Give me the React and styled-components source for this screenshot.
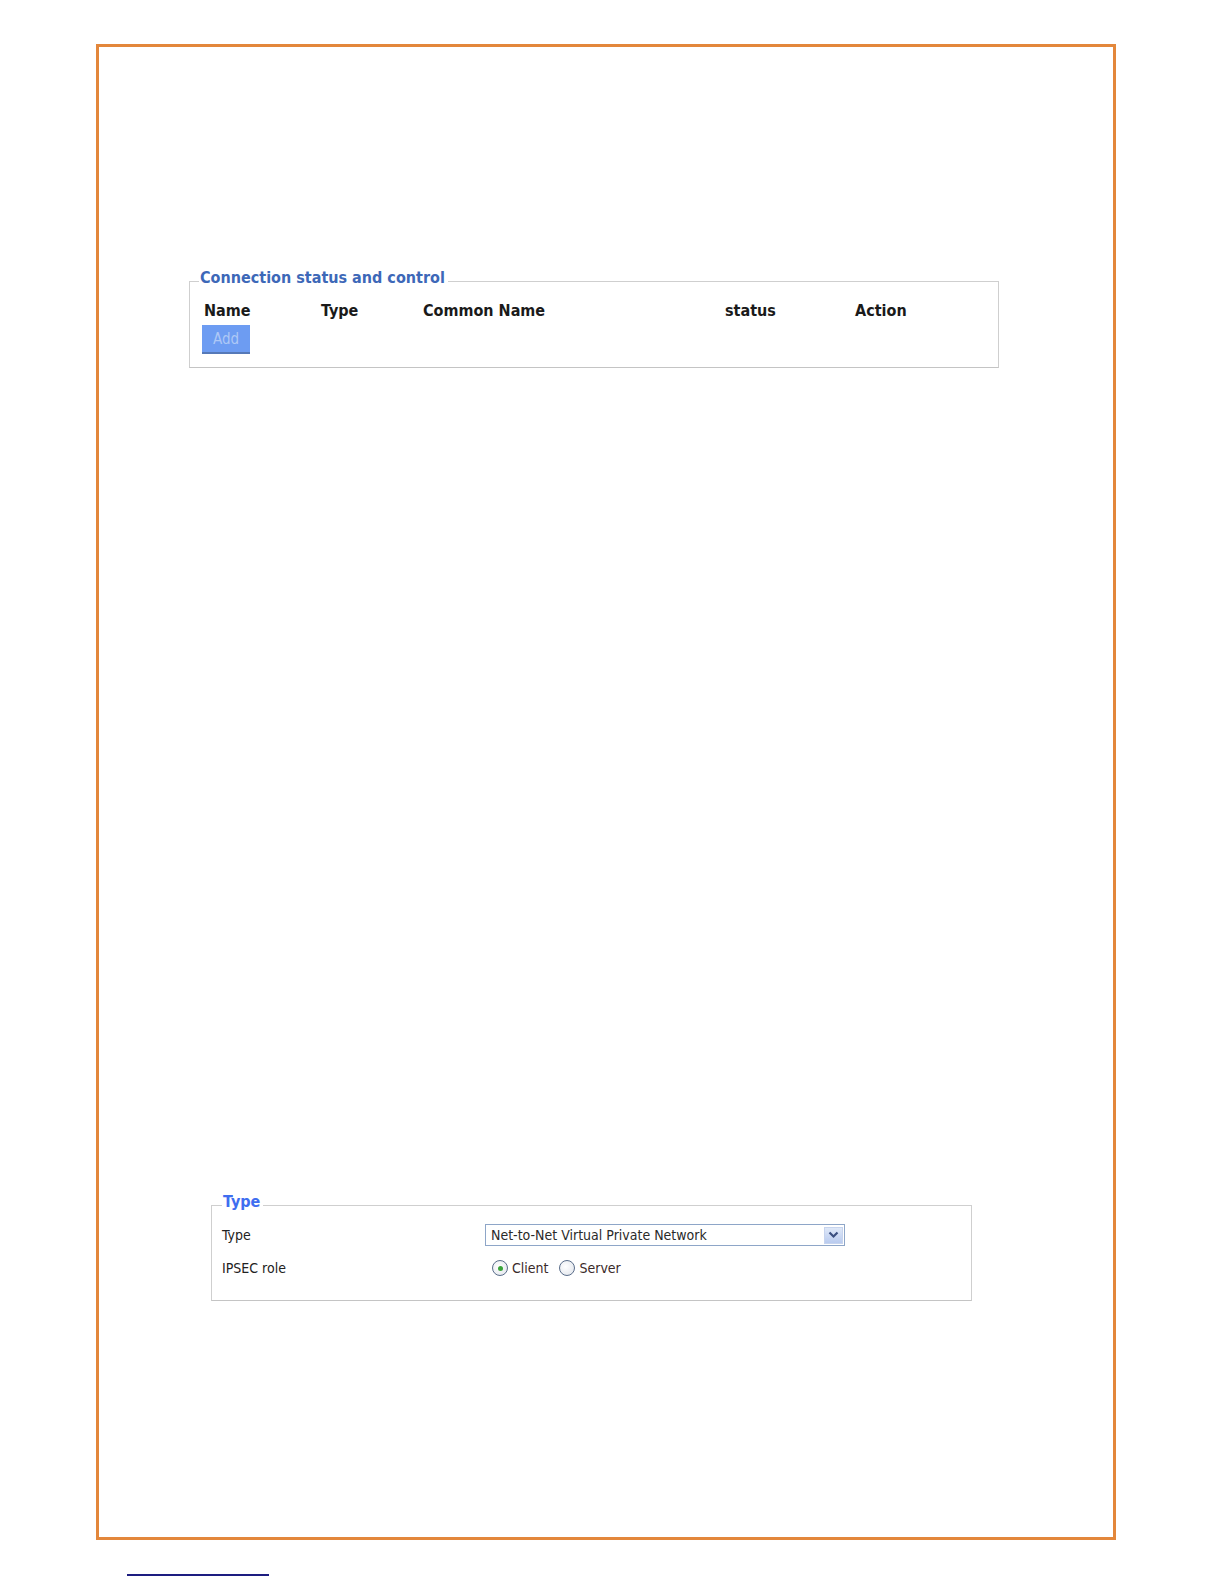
import React from 'react';
import styled, { createGlobalStyle } from 'styled-components';

const GlobalStyle = createGlobalStyle`
  html, body {
    margin: 0;
    background: #ffffff;
    overflow: hidden;
    font-family: "DejaVu Sans Condensed", "DejaVu Sans", sans-serif;
  }
`;

const headers = [
  { label: 'Name', width: 117 },
  { label: 'Type', width: 102 },
  { label: 'Common Name', width: 302 },
  { label: 'status', width: 130 },
  { label: 'Action', width: 100 },
];

const Page = styled.div`
  padding: 44px 0 0 96px;
`;

const Frame = styled.div`
  width: 1020px;
  height: 1496px;
  box-sizing: border-box;
  border: 3px solid #e3873b;
  padding-top: 221px;
`;

const Fieldset = styled.fieldset`
  margin: ${(p) => p.$margin};
  width: ${(p) => p.$width}px;
  box-sizing: border-box;
  border: 1px solid #cfcfcf;
  border-bottom-color: #c4c4c4;
  padding: ${(p) => p.$padding};
  min-width: 0;
`;

// text sits a little above the border line, as in the old router UI
const Legend = styled.legend`
  padding: 0 3px 8px 1px;
  margin-left: ${(p) => p.$indent}px;
  font-weight: bold;
  font-size: 16px;
  line-height: 19px;
  color: ${(p) => p.$color};
`;

const HeaderRow = styled.div`
  display: flex;
  padding-left: 14px;
  font-weight: bold;
  font-size: 16px;
  color: #1a1a1a;
  line-height: 20px;
`;

const HeaderCell = styled.div`
  width: ${(p) => p.$width}px;
  flex: none;
`;

const AddButton = styled.button`
  display: block;
  margin: 4px 0 0 12px;
  width: 48px;
  height: 29px;
  background: #6d9cf2;
  border: none;
  border-bottom: 2px solid #5679b8;
  color: #aec8f6;
  font-family: inherit;
  font-size: 15px;
  padding: 0;
`;

const FormRow = styled.div`
  display: flex;
  align-items: center;
  height: ${(p) => p.$height}px;
  font-size: 14px;
  color: #222;
`;

const Label = styled.div`
  width: 263px;
  flex: none;
`;

const Select = styled.div`
  width: 360px;
  height: 22px;
  box-sizing: border-box;
  border: 1px solid #8ea6c8;
  display: flex;
  align-items: center;
  justify-content: space-between;
  padding: 0 1px 0 5px;
  font-size: 14px;
  color: #2a2a2a;
  background: #fff;
`;

const Arrow = styled.div`
  width: 19px;
  height: 17px;
  background: linear-gradient(#dfe8f8, #b9cbef);
  border: 1px solid #c7d4ee;
  display: flex;
  align-items: center;
  justify-content: center;
  box-sizing: border-box;
`;

const Radios = styled.div`
  display: flex;
  align-items: center;
  padding-left: 7px;
  gap: 11px;
`;

const RadioOption = styled.label`
  display: flex;
  align-items: center;
  gap: 4px;
  color: #3a2a2a;
`;

const RadioDot = styled.span`
  width: 16px;
  height: 16px;
  box-sizing: border-box;
  border-radius: 50%;
  border: 1px solid #5a6d8a;
  background: radial-gradient(circle at 40% 40%, #ffffff, #dfe3ea);
  display: flex;
  align-items: center;
  justify-content: center;
  &::after {
    content: '';
    width: 5px;
    height: 5px;
    border-radius: 50%;
    background: ${(p) => (p.$checked ? '#3aa43a' : 'transparent')};
  }
`;

const FootLine = styled.div`
  margin: 34px 0 0 31px;
  width: 142px;
  height: 2px;
  background: #1d1d80;
`;

export default function App() {
  return (
    <>
      <GlobalStyle />
      <Page>
        <Frame>
          <Fieldset $margin="0 0 0 90px" $width={810} $padding="6px 0 13px 0">
            <Legend $indent={9} $color="#3d68b8">Connection status and control</Legend>
            <HeaderRow>
              {headers.map((h) => (
                <HeaderCell key={h.label} $width={h.width}>{h.label}</HeaderCell>
              ))}
            </HeaderRow>
            <AddButton>Add</AddButton>
          </Fieldset>

          <Fieldset $margin="824px 0 0 112px" $width={761} $padding="1px 10px 14px 10px">
            <Legend $indent={0} $color="#3f6ef0">Type</Legend>
            <FormRow $height={30}>
              <Label>Type</Label>
              <Select>
                <span>Net-to-Net Virtual Private Network</span>
                <Arrow>
                  <svg width="11" height="8" viewBox="0 0 11 8">
                    <path d="M1.5 1.5 L5.5 5.5 L9.5 1.5" fill="none" stroke="#3b4f80" strokeWidth="2.2" />
                  </svg>
                </Arrow>
              </Select>
            </FormRow>
            <FormRow $height={36}>
              <Label>IPSEC role</Label>
              <Radios>
                <RadioOption>
                  <RadioDot $checked />
                  Client
                </RadioOption>
                <RadioOption>
                  <RadioDot />
                  Server
                </RadioOption>
              </Radios>
            </FormRow>
          </Fieldset>
        </Frame>
        <FootLine />
      </Page>
    </>
  );
}
